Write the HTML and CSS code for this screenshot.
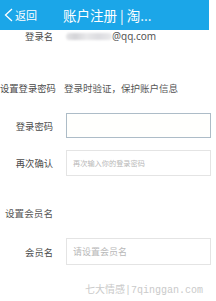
FILE: index.html
```html
<!DOCTYPE html>
<html lang="zh-CN">
<head>
<meta charset="utf-8">
<title>账户注册</title>
<link rel="stylesheet" href="styles.css">
</head>
<body>
<div class="page">
  <header class="bar">
    <div class="back">
      <svg class="chev" width="9" height="14" viewBox="0 0 9 14"><path d="M8 1 L1.5 7 L8 13" fill="none" stroke="#fff" stroke-width="1.3"/></svg>
      <span>返回</span>
    </div>
    <div class="title">账户注册 | 淘...</div>
  </header>

  <div class="row r-login">
    <div class="label">登录名</div>
    <div class="value"><span class="blur"></span><span class="mail">@qq.com</span></div>
  </div>

  <div class="row r-sec1">
    <div class="label">设置登录密码</div>
    <div class="value hint">登录时验证，保护账户信息</div>
  </div>

  <div class="row r-pw">
    <div class="label">登录密码</div>
    <div class="box focus"></div>
  </div>

  <div class="row r-pw2">
    <div class="label">再次确认</div>
    <div class="box"><span class="ph ph-sm">再次输入你的登录密码</span></div>
  </div>

  <div class="row r-sec2">
    <div class="label">设置会员名</div>
  </div>

  <div class="row r-name">
    <div class="label">会员名</div>
    <div class="box tall"><span class="ph">请设置会员名</span></div>
  </div>

  <div class="mark">七大情感|7qinggan.com</div>
</div>
</body>
</html>
```

FILE: styles.css
```css
* { box-sizing: border-box; }
html, body { margin: 0; padding: 0; background: #fff; }
body {
  font-family: "Noto Sans CJK SC", "Noto Sans", sans-serif;
  width: 216px;
  height: 301px;
  overflow: hidden;
}
.page { display: flex; flex-direction: column; }

.bar {
  width: 209px;
  height: 30px;
  background: #1ba6e8;
  color: #fff;
  display: flex;
  align-items: center;
}
.back {
  display: flex;
  align-items: center;
  margin-left: 4px;
  font-size: 11px;
  gap: 2px;
}
.title {
  margin-left: 26px;
  font-size: 13.5px;
}

.row {
  display: flex;
  align-items: center;
  gap: 13px;
}
.label {
  width: 53px;
  text-align: right;
  font-size: 9.3px;
  color: #4a4a4a;
  white-space: nowrap;
  line-height: 12px;
}
.value {
  font-size: 9.5px;
  color: #4a4a4a;
  display: flex;
  align-items: center;
  line-height: 12px;
}
.r-login { height: 12px; }
.blur {
  width: 46px;
  height: 7px;
  border-radius: 4px;
  background: linear-gradient(90deg, #e4e4e6 0%, #d4d4d8 20%, #e8e8ea 45%, #dcdce0 70%, #eaeaec 100%);
  filter: blur(1px);
}
.mail { font-family: "Noto Sans", sans-serif; font-size: 10px; color: #555; }

.r-sec1 { height: 13px; margin-top: 39px; }
.hint { margin-left: -2px; color: #555; }

.box {
  width: 145px;
  height: 25px;
  border: 1px solid #e4e4e4;
  display: flex;
  align-items: center;
  padding-left: 5px;
}
.box.focus { border-color: #adbcc7; background: #fffffd; }
.box.tall { height: 27px; padding-left: 6px; }
.ph { font-size: 9px; color: #b8b8b8; white-space: nowrap; }
.ph-sm { font-size: 7.2px; padding-left: 1px; }

.r-pw { margin-top: 19px; }
.r-pw2 { margin-top: 12px; }
.r-pw2 .box { height: 26px; }
.r-sec2 { height: 13px; margin-top: 30px; }
.r-sec2 .label { font-size: 9.6px; color: #555; }
.r-name { margin-top: 19px; }

.mark {
  margin-top: 20px;
  margin-left: 85px;
  height: 12px;
  line-height: 12px;
  font-family: "Liberation Mono", "Noto Sans CJK SC", monospace;
  font-size: 10px;
  color: #cacaca;
  white-space: nowrap;
}
```
